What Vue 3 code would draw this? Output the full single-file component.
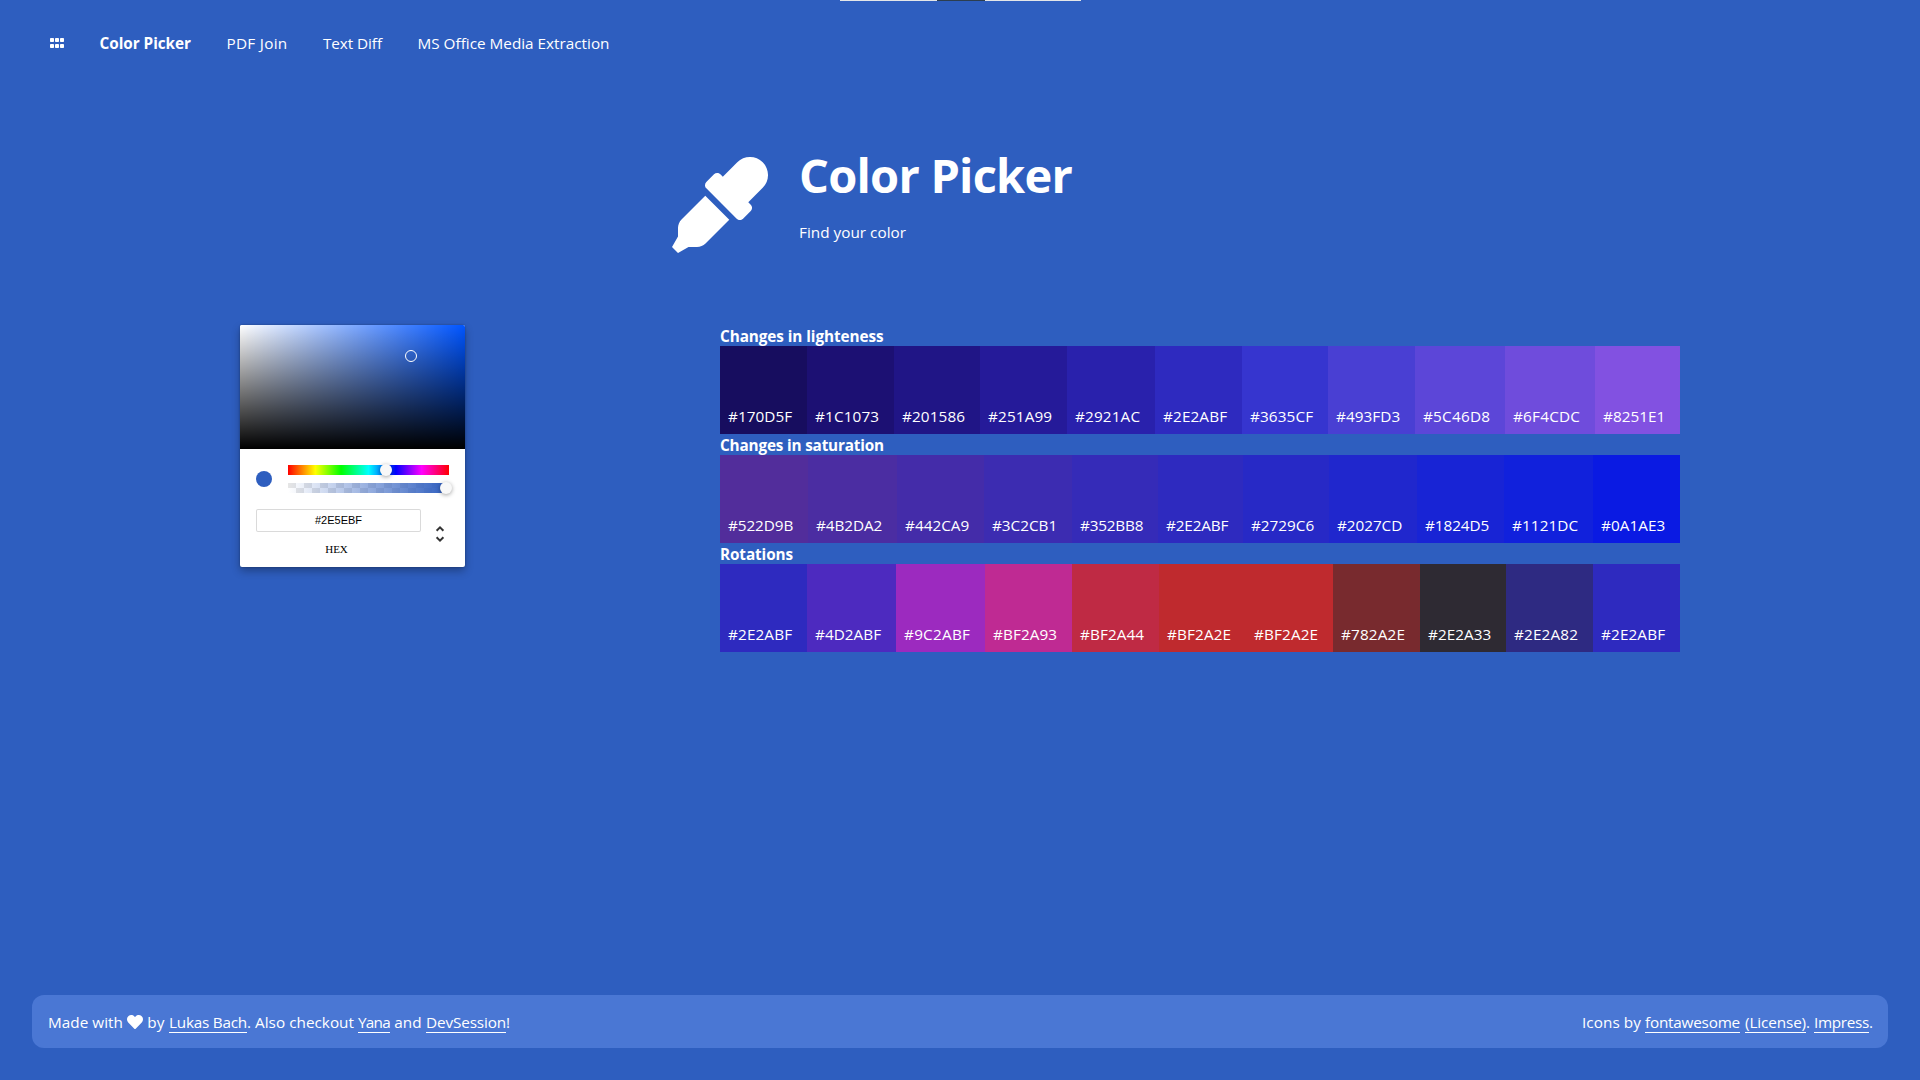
<script setup>
const navItems = [
  { label: 'Color Picker', width: 91.5, active: true },
  { label: 'PDF Join', width: 61 },
  { label: 'Text Diff', width: 59 },
  { label: 'MS Office Media Extraction', width: 192 },
]

const scale = (title, titleWidth, colors, widths) => ({
  title,
  titleWidth,
  swatches: colors.map((hex, i) => ({ hex, width: widths[i] })),
})

const scales = [
  scale(
    'Changes in lighteness', 163.5,
    ['#170D5F', '#1C1073', '#201586', '#251A99', '#2921AC', '#2E2ABF', '#3635CF', '#493FD3', '#5C46D8', '#6F4CDC', '#8251E1'],
    [87, 87, 86, 87, 88, 87, 86, 87, 90, 90, 85],
  ),
  scale(
    'Changes in saturation', 164,
    ['#522D9B', '#4B2DA2', '#442CA9', '#3C2CB1', '#352BB8', '#2E2ABF', '#2729C6', '#2027CD', '#1824D5', '#1121DC', '#0A1AE3'],
    [88, 89, 87, 88, 86, 85, 86, 88, 87, 89, 87],
  ),
  scale(
    'Rotations', 73,
    ['#2E2ABF', '#4D2ABF', '#9C2ABF', '#BF2A93', '#BF2A44', '#BF2A2E', '#BF2A2E', '#782A2E', '#2E2A33', '#2E2A82', '#2E2ABF'],
    [87, 89, 89, 87, 87, 87, 87, 87, 86, 87, 87],
  ),
]

const footerLeft = [
  { text: 'Made with ', width: 79 },
  { heart: true },
  { text: ' by ', width: 26 },
  { text: 'Lukas Bach', width: 78, link: true },
  { text: '. Also checkout ', width: 111 },
  { text: 'Yana', width: 32, link: true },
  { text: ' and ', width: 36 },
  { text: 'DevSession', width: 80, link: true },
  { text: '!', width: 4.5 },
]

const footerRight = [
  { text: 'Icons by ', width: 63 },
  { text: 'fontawesome', width: 95, link: true },
  { text: ' ', width: 5 },
  { text: '(License)', width: 61, link: true },
  { text: '. ', width: 8 },
  { text: 'Impress', width: 55, link: true },
  { text: '.', width: 3 },
]

// Tracks a label in or out so that it occupies the given advance width.
const vFit = {
  mounted(el, { value }) {
    const natural = el.getBoundingClientRect().width
    el.style.letterSpacing = `${(value - natural) / el.textContent.length}px`
  },
}
</script>

<template>
  <div class="page">
    <div class="top-strip"><i></i></div>

    <nav class="nav">
      <svg class="grid-icon" viewBox="0 0 14 10" width="14" height="10">
        <g fill="#fff">
          <rect x="0" y="0" width="4" height="4" rx=".8" />
          <rect x="5" y="0" width="4" height="4" rx=".8" />
          <rect x="10" y="0" width="4" height="4" rx=".8" />
          <rect x="0" y="6" width="4" height="4" rx=".8" />
          <rect x="5" y="6" width="4" height="4" rx=".8" />
          <rect x="10" y="6" width="4" height="4" rx=".8" />
        </g>
      </svg>
      <a v-for="item in navItems" :key="item.label" class="nav-link" :class="{ active: item.active }">
        <span v-fit="item.width" class="fit">{{ item.label }}</span>
      </a>
    </nav>

    <header class="hero">
      <svg class="dropper" viewBox="0 0 512 512" width="96" height="96">
        <path fill="#fff" d="M50.75 333.25c-12 12-18.75 28.28-18.75 45.26V424L0 480l32 32 56-32h45.49c16.97 0 33.25-6.74 45.25-18.74l126.64-126.62-128-128L50.75 333.25zM483.88 28.12c-37.47-37.5-98.28-37.5-135.75 0l-77.09 77.09-13.1-13.1c-9.44-9.44-24.65-9.31-33.94 0l-40.97 40.97c-9.37 9.37-9.37 24.57 0 33.94l161.94 161.94c9.44 9.44 24.65 9.31 33.94 0L419.88 288c9.37-9.37 9.37-24.57 0-33.94l-13.1-13.1 77.09-77.09c37.51-37.48 37.51-98.26.01-135.75z" />
      </svg>
      <div class="hero-text">
        <h1><span v-fit="273" class="fit">Color Picker</span></h1>
        <p><span v-fit="107" class="fit">Find your color</span></p>
      </div>
    </header>

    <main class="content">
      <section class="picker">
        <div class="saturation"><i class="pointer"></i></div>
        <div class="picker-body">
          <div class="controls">
            <i class="current"></i>
            <div class="sliders">
              <div class="hue"><i class="knob knob-hue"></i></div>
              <div class="alpha"><i class="knob knob-alpha"></i></div>
            </div>
          </div>
          <div class="fields">
            <div class="field">
              <div class="hex-input">#2E5EBF</div>
              <div class="hex-label">HEX</div>
            </div>
            <svg class="arrows" viewBox="0 0 10 20" width="10" height="20">
              <path d="M1.6 6.7 5 3.4 8.4 6.7M1.6 13.3 5 16.6 8.4 13.3" fill="none" stroke="#333" stroke-width="2" />
            </svg>
          </div>
        </div>
      </section>

      <section class="scales">
        <div v-for="row in scales" :key="row.title">
          <h2><span v-fit="row.titleWidth" class="fit">{{ row.title }}</span></h2>
          <div class="row">
            <div
              v-for="(swatch, i) in row.swatches"
              :key="i"
              class="swatch"
              :style="{ width: swatch.width + 'px', background: swatch.hex }"
            >
              <span v-fit="swatch.width - 22.8" class="fit">{{ swatch.hex }}</span>
            </div>
          </div>
        </div>
      </section>
    </main>

    <footer class="footer">
      <div v-for="(group, g) in [footerLeft, footerRight]" :key="g" class="footer-group">
        <template v-for="(part, i) in group" :key="i">
          <svg v-if="part.heart" class="heart" viewBox="0 0 512 512" width="16" height="16">
            <path fill="#fff" d="M462.3 62.6C407.5 15.9 326 24.3 275.7 76.2L256 96.5l-19.7-20.3C186.1 24.3 104.5 15.9 49.7 62.6c-62.8 53.6-66.1 149.8-9.9 207.9l193.5 199.8c12.5 12.9 32.8 12.9 45.3 0l193.5-199.8c56.3-58.1 53-154.3-9.8-207.9z" />
          </svg>
          <span v-else v-fit="part.width" class="fit" :class="{ link: part.link }">{{ part.text }}</span>
        </template>
      </div>
    </footer>
  </div>
</template>

<style>
body {
  margin: 0;
  background: #2e5ebf;
}
</style>

<style scoped>
.page {
  position: relative;
  box-sizing: border-box;
  display: flex;
  flex-direction: column;
  height: 1080px;
  padding: 32px 32px;
  overflow: hidden;
  background: #2e5ebf;
  color: #fff;
  font: 15.3px/21px "Open Sans", "Noto Sans", sans-serif;
}
.fit {
  display: inline-block;
  white-space: pre;
}
.top-strip {
  position: absolute;
  top: 0;
  left: 840px;
  display: flex;
  justify-content: center;
  width: 241px;
  height: 1px;
  background: #e4e6e8;
}
.top-strip i {
  width: 48px;
  background: #2c3e50;
}
.nav {
  display: flex;
  align-items: center;
  gap: 35.5px;
  height: 22px;
  padding-left: 18px;
}
.nav-link.active {
  font-weight: 700;
}
.hero {
  display: flex;
  gap: 32px;
  margin: 95px 0 0 640px;
  padding-top: 8px;
  height: 104px;
}
.hero-text {
  margin: -8px 0 0 -1px;
}
h1 {
  margin: 0;
  font-size: 47px;
  line-height: 53px;
  font-weight: 700;
}
p {
  margin: 20px 0 0;
}
.content {
  display: flex;
  gap: 255px;
  align-items: flex-start;
  margin: 64px 0 0 208px;
}
.picker {
  width: 225px;
  height: 242px;
  border-radius: 2px;
  background: #fff;
  color: #000;
  box-shadow: 0 0 2px rgba(0, 0, 0, .3), 0 4px 8px rgba(0, 0, 0, .3);
}
.saturation {
  position: relative;
  height: 124px;
  border-radius: 2px 2px 0 0;
  background: linear-gradient(to top, #000, transparent), linear-gradient(to right, #fff, rgba(255, 255, 255, 0)), #0055ff;
}
.pointer {
  position: absolute;
  left: 165px;
  top: 25px;
  box-sizing: border-box;
  width: 12px;
  height: 12px;
  border: 1px solid #fff;
  border-radius: 50%;
}
.picker-body {
  padding: 16px;
}
.controls {
  display: flex;
  align-items: flex-start;
  justify-content: space-between;
}
.current {
  width: 16px;
  height: 16px;
  margin-top: 6px;
  border-radius: 50%;
  background: #2e5ebf;
}
.sliders {
  display: flex;
  flex-direction: column;
  gap: 8px;
  width: 161px;
}
.hue,
.alpha {
  position: relative;
  height: 10px;
}
.hue {
  background: linear-gradient(to right, #f00 0%, #ff0 17%, #0f0 33%, #0ff 50%, #00f 67%, #f0f 83%, #f00 100%);
}
.alpha {
  background:
    linear-gradient(to right, rgba(46, 94, 191, 0), #2e5ebf),
    conic-gradient(#fff 25%, #e6e6e6 0 50%, #fff 0 75%, #e6e6e6 0) 0 -3px / 16px 16px;
}
.knob {
  position: absolute;
  top: -1px;
  width: 12px;
  height: 12px;
  border-radius: 50%;
  background: #f8f8f8;
  box-shadow: 0 1px 4px rgba(0, 0, 0, .37);
}
.knob-hue {
  left: 92px;
}
.knob-alpha {
  left: 152px;
}
.fields {
  display: flex;
  gap: 14px;
  padding-top: 16px;
}
.field {
  width: 165px;
  text-align: center;
}
.hex-input {
  height: 23px;
  border-radius: 2px;
  box-shadow: inset 0 0 0 1px #dadada;
  font: 11px/23px "Liberation Sans", Arial, sans-serif;
}
.hex-label {
  margin: 12px 4px 0 0;
  font: 11px/11px "Liberation Serif", "Times New Roman", serif;
}
.arrows {
  margin-top: 15px;
}
.scales {
  width: 960px;
}
h2 {
  height: 21px;
  margin: 0;
  font-size: 15.3px;
  line-height: 23px;
  font-weight: 700;
}
.row {
  display: flex;
}
.swatch {
  box-sizing: border-box;
  height: 88px;
  padding: 60px 0 0 8px;
}
.footer {
  display: flex;
  justify-content: space-between;
  height: 21px;
  margin-top: auto;
  padding: 16px;
  border-radius: 12px;
  background: #4a77d4;
}
.footer-group {
  display: flex;
  align-items: flex-start;
}
.footer .fit {
  height: 21px;
  line-height: 23px;
}
.heart {
  margin-top: 3px;
}
.link {
  border-bottom: 1px solid #fff;
}
</style>
